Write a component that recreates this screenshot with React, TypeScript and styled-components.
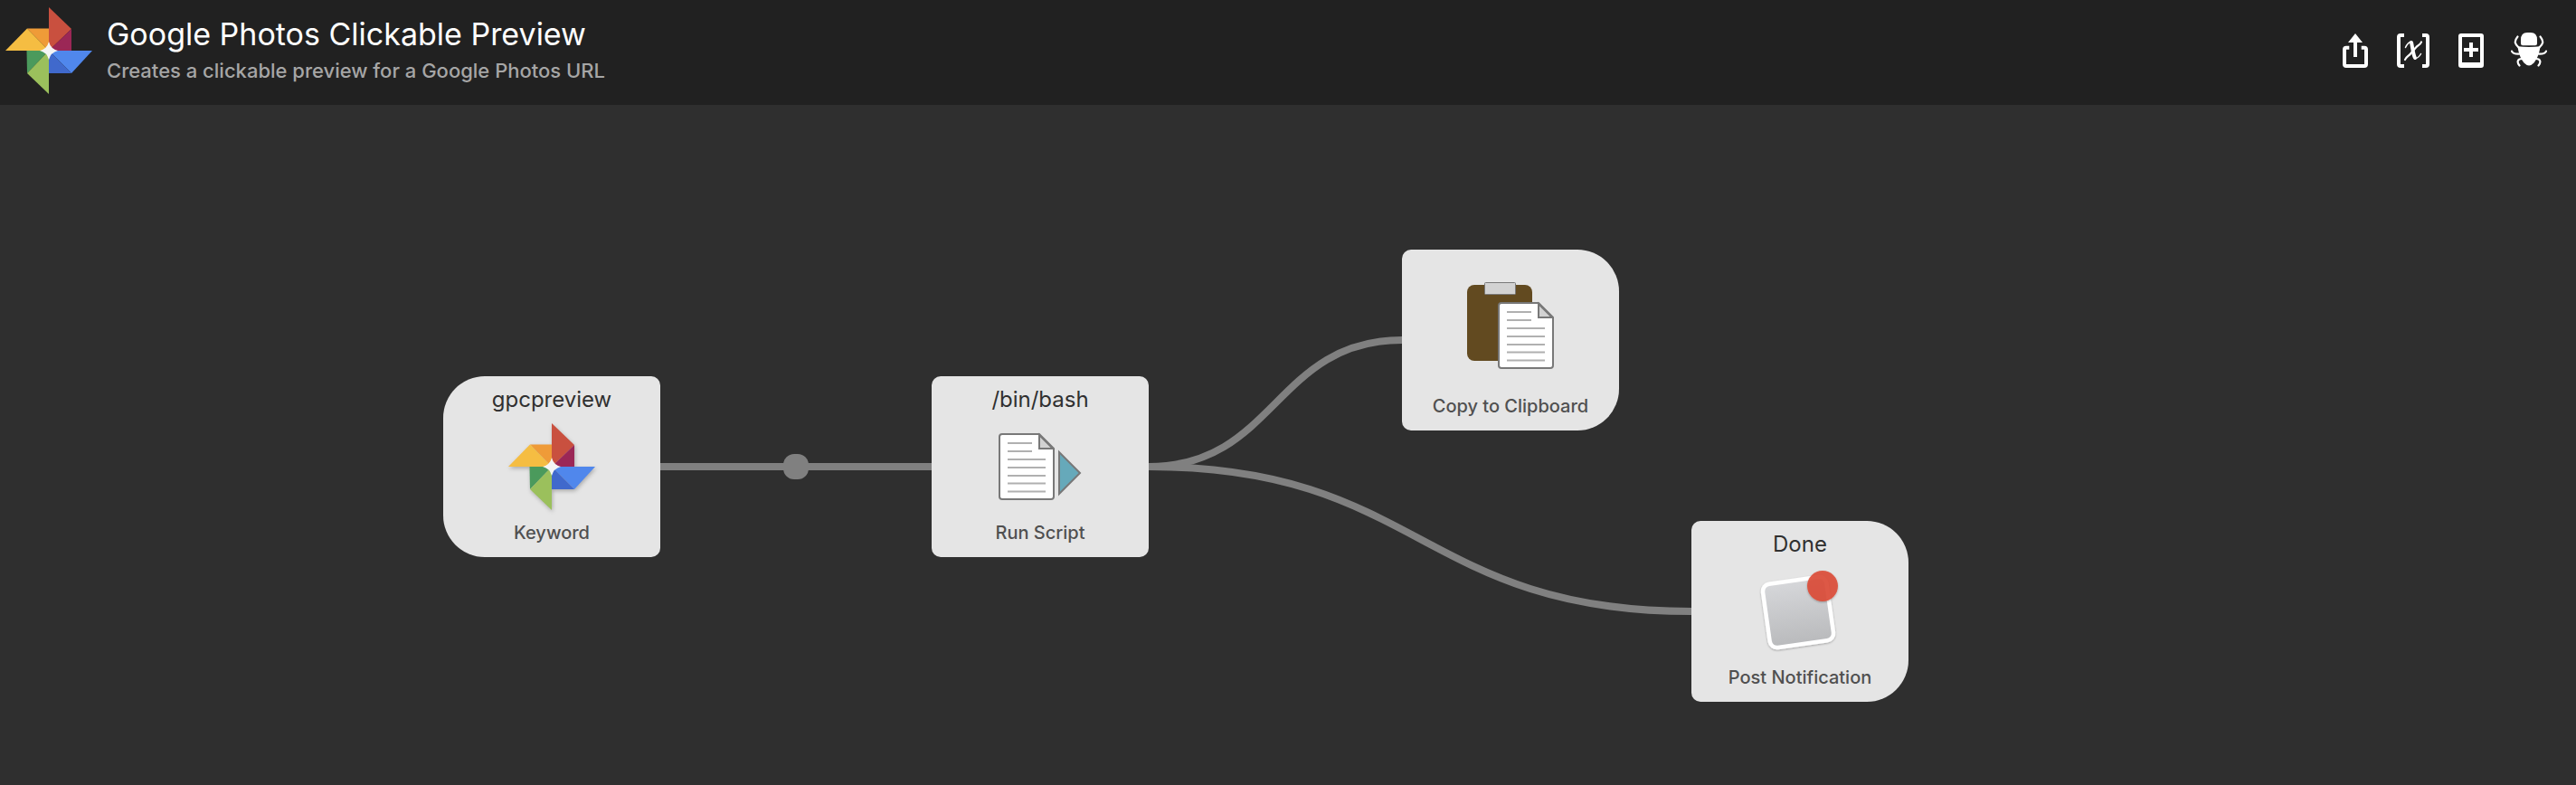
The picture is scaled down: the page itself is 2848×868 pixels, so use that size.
import React from 'react';
import styled, { createGlobalStyle } from 'styled-components';

const GlobalStyle = createGlobalStyle`
  *, *::before, *::after { box-sizing: border-box; }
  html, body, #root { height: 100%; }
  body {
    margin: 0;
    background: #2f2f2f;
    font-family: Inter, Roboto, "Liberation Sans", sans-serif;
  }
`;

const Page = styled.div`
  display: flex;
  flex-direction: column;
  min-height: 100%;
`;

const Header = styled.header`
  display: flex;
  align-items: center;
  gap: 16px;
  padding: 8px 20px 12px 6px;
  background: #212121;
`;

const Heading = styled.div`
  flex: 1;
  min-width: 0;
`;

const Title = styled.h1`
  margin: 0;
  font-size: 34px;
  line-height: 44px;
  font-weight: 400;
  color: #fff;
`;

const Subtitle = styled.p`
  margin: 0;
  font-size: 22px;
  line-height: 36px;
  font-weight: 500;
  color: #a6a6a6;
`;

const Toolbar = styled.nav`
  display: flex;
`;

const ToolButton = styled.button`
  display: flex;
  align-items: center;
  justify-content: center;
  width: 64px;
  height: 64px;
  padding: 0;
  border: 0;
  background: none;
  color: #fff;
  cursor: pointer;
`;

const Canvas = styled.main`
  position: relative;
  flex: 1;
  min-height: 720px;
  overflow: hidden;
`;

const Wires = styled.svg`
  position: absolute;
  inset: 0;
  width: 100%;
  height: 100%;
`;

type Shape = 'input' | 'action' | 'output';

const corners: Record<Shape, string> = {
  input: '46px 10px 10px 46px',
  action: '10px',
  output: '10px 46px 46px 10px',
};

const Node = styled.article<{ $x: number; $y: number; $shape: Shape }>`
  position: absolute;
  left: ${(p) => p.$x}px;
  top: ${(p) => p.$y}px;
  display: flex;
  flex-direction: column;
  align-items: center;
  width: 240px;
  height: 200px;
  padding: 10px 0 12px;
  border-radius: ${(p) => corners[p.$shape]};
  background: #e5e5e5;
`;

const NodeTitle = styled.h2`
  margin: 0;
  font-size: 24px;
  line-height: 32px;
  font-weight: 400;
  color: #303030;
`;

const NodeArt = styled.div`
  flex: 1;
  display: flex;
  align-items: center;
`;

const NodeKind = styled.p`
  margin: 0;
  font-size: 20px;
  line-height: 30px;
  font-weight: 500;
  color: #505050;
`;

const PinwheelSvg = styled.svg<{ $shadow?: boolean }>`
  display: block;
  flex: none;
  filter: ${(p) => (p.$shadow ? 'drop-shadow(1px 2px 2px rgba(0, 0, 0, 0.25))' : 'none')};
`;

function Pinwheel({ shadow }: { shadow?: boolean }) {
  return (
    <PinwheelSvg $shadow={shadow} width="96" height="96" viewBox="0 0 96 96" aria-hidden="true">
      <path d="M48 0 73 24 48 48Z" fill="#c9503f" />
      <path d="M73 24V48H48Z" fill="#9b2756" />
      <path d="M24 23.5H48V48Z" fill="#ef9b38" />
      <path d="M0 48 24 23.5 48 48Z" fill="#f5bd42" />
      <path d="M23.5 48H48L24 73Z" fill="#4b9a5c" />
      <path d="M24 73 48 48V96Z" fill="#9bc05c" />
      <path d="M48 48H96L73 73Z" fill="#5087ec" />
      <path d="M48 48V73H73Z" fill="#4069cc" />
      <path d="M48 38Q50 46 58 48Q50 50 48 58Q46 50 38 48Q46 46 48 38Z" fill="#f5f5f5" />
    </PinwheelSvg>
  );
}

function Sheet({ x, y }: { x: number; y: number }) {
  return (
    <g transform={`translate(${x} ${y})`}>
      <path
        d="M4 1H45L61 17V70a3 3 0 0 1-3 3H4a3 3 0 0 1-3-3V4a3 3 0 0 1 3-3Z"
        fill="#fff"
        stroke="#787878"
        strokeWidth="2"
      />
      <path d="M45 2V17H60Z" fill="#d2d2d2" stroke="#787878" strokeWidth="2" />
      <path
        d="M10 11H37M10 20H37M10 29H52M10 38H52M10 47H52M10 55.500H52M10 64.500H52"
        stroke="#b0b0b0"
        strokeWidth="2"
      />
    </g>
  );
}

function ScriptArt() {
  return (
    <svg width="96" height="96" viewBox="0 0 96 96" aria-hidden="true">
      <Sheet x={2} y={11} />
      <path d="M69 32V78L92 55Z" fill="#66a9ba" stroke="#787878" strokeWidth="2" />
    </svg>
  );
}

function ClipboardArt() {
  return (
    <svg width="96" height="96" viewBox="0 0 96 96" aria-hidden="true">
      <rect x="0" y="3" width="72" height="84" rx="8" fill="#624a20" />
      <rect x="19.500" y="0.500" width="34" height="13" rx="1" fill="#d2d2d2" stroke="#787878" />
      <Sheet x={34} y={22} />
    </svg>
  );
}

function NotificationArt() {
  return (
    <svg width="96" height="96" viewBox="0 0 96 96" overflow="visible" aria-hidden="true">
      <defs>
        <linearGradient id="tile" x1="0" y1="0" x2="0" y2="1">
          <stop offset="0" stopColor="#d6d7da" />
          <stop offset="1" stopColor="#b9babc" />
        </linearGradient>
        <filter id="lift" x="-20%" y="-20%" width="140%" height="140%">
          <feDropShadow dx="0" dy="1" stdDeviation="1" floodOpacity="0.3" />
        </filter>
      </defs>
      <g filter="url(#lift)">
        <rect
          x="10.500"
          y="13.500"
          width="71"
          height="71"
          rx="8"
          fill="url(#tile)"
          stroke="#fff"
          strokeWidth="4.500"
          transform="rotate(-8 46 49)"
        />
      </g>
      <circle cx="73" cy="20" r="17" fill="#dd4a34" fillOpacity="0.88" filter="url(#lift)" />
    </svg>
  );
}

const icon = { width: 40, height: 40, viewBox: '0 0 40 40', 'aria-hidden': true } as const;

function ShareIcon() {
  return (
    <svg {...icon}>
      <path
        d="M13.300 16.700H10a2 2 0 0 0-2 2V35a2 2 0 0 0 2 2H30a2 2 0 0 0 2-2V18.700a2 2 0 0 0-2-2H26.700"
        fill="none"
        stroke="currentColor"
        strokeWidth="4"
      />
      <path d="M20 1 28 11H22V27H18V11H12Z" fill="currentColor" />
    </svg>
  );
}

function VariableIcon() {
  return (
    <svg {...icon} fill="none" stroke="currentColor">
      <path d="M10 3H6a2 2 0 0 0-2 2V35a2 2 0 0 0 2 2H10M30 3H34a2 2 0 0 1 2 2V35a2 2 0 0 1-2 2H30" strokeWidth="4" />
      <g strokeLinecap="round">
        <path d="M18 11C19 15 20 25 22 28" strokeWidth="4" />
        <path d="M11.500 16.500Q14 11 18 10M22 29Q26 28 28.500 23.500" strokeWidth="1.500" />
        <path d="M11 30C12 27 15 26 17 23.500L23 16.500C25 14 28 13.500 29 10.500" strokeWidth="2.200" />
      </g>
    </svg>
  );
}

function AddPageIcon() {
  return (
    <svg {...icon}>
      <path
        fillRule="evenodd"
        d="M9 1H31a3 3 0 0 1 3 3V36a3 3 0 0 1-3 3H9a3 3 0 0 1-3-3V4a3 3 0 0 1 3-3ZM10 5V33H30V5Z"
        fill="currentColor"
      />
      <path d="M18 11H22V17H28V21H22V27H18V21H12V17H18Z" fill="currentColor" />
    </svg>
  );
}

function BugIcon() {
  return (
    <svg {...icon}>
      <path d="M13 14.300Q11 14.300 11 12V8Q11 0 18 0H22Q29 0 29 8V12Q29 14.300 27 14.300Z" fill="currentColor" />
      <path d="M7.500 15.300Q20 16.500 32.500 15.300C31.500 22 30 28 25.500 33.500Q22.500 36.500 20 36.500T14.500 33.500C10 28 8.500 22 7.500 15.300Z" fill="currentColor" />
      <path
        d="M7.500 4.500C3 10 4.500 13 9 17M32.500 4.500C37 10 35.500 13 31 17M1 20.500Q2 24 10 23.500M39 20.500Q38 24 30 23.500M12 29C7 29 6.500 33 9.500 36.500M28 29C33 29 33.500 33 30.500 36.500"
        fill="none"
        stroke="currentColor"
        strokeWidth="2.200"
        strokeLinecap="round"
      />
    </svg>
  );
}

const tools = [
  { label: 'Export workflow', Icon: ShareIcon },
  { label: 'Workflow variables', Icon: VariableIcon },
  { label: 'Add object', Icon: AddPageIcon },
  { label: 'Debug', Icon: BugIcon },
];

const nodes: { x: number; y: number; shape: Shape; title?: string; kind: string; art: React.ReactNode }[] = [
  { x: 490, y: 300, shape: 'input', title: 'gpcpreview', kind: 'Keyword', art: <Pinwheel shadow /> },
  { x: 1030, y: 300, shape: 'action', title: '/bin/bash', kind: 'Run Script', art: <ScriptArt /> },
  { x: 1550, y: 160, shape: 'output', kind: 'Copy to Clipboard', art: <ClipboardArt /> },
  { x: 1870, y: 460, shape: 'output', title: 'Done', kind: 'Post Notification', art: <NotificationArt /> },
];

export default function App() {
  return (
    <Page>
      <GlobalStyle />
      <Header>
        <Pinwheel />
        <Heading>
          <Title>Google Photos Clickable Preview</Title>
          <Subtitle>Creates a clickable preview for a Google Photos URL</Subtitle>
        </Heading>
        <Toolbar aria-label="Workflow tools">
          {tools.map(({ label, Icon }) => (
            <ToolButton key={label} type="button" aria-label={label}>
              <Icon />
            </ToolButton>
          ))}
        </Toolbar>
      </Header>
      <Canvas>
        <Wires aria-hidden="true">
          <g fill="none" stroke="#808080" strokeWidth="8">
            <path d="M730 400H1030" />
            <path d="M1270 400C1410 400 1410 260 1550 260" />
            <path d="M1270 400C1570 400 1570 560 1870 560" />
          </g>
          <rect x="866" y="386" width="28" height="28" rx="12" fill="#808080" />
        </Wires>
        {nodes.map((n) => (
          <Node key={n.kind} $x={n.x} $y={n.y} $shape={n.shape}>
            {n.title && <NodeTitle>{n.title}</NodeTitle>}
            <NodeArt>{n.art}</NodeArt>
            <NodeKind>{n.kind}</NodeKind>
          </Node>
        ))}
      </Canvas>
    </Page>
  );
}
